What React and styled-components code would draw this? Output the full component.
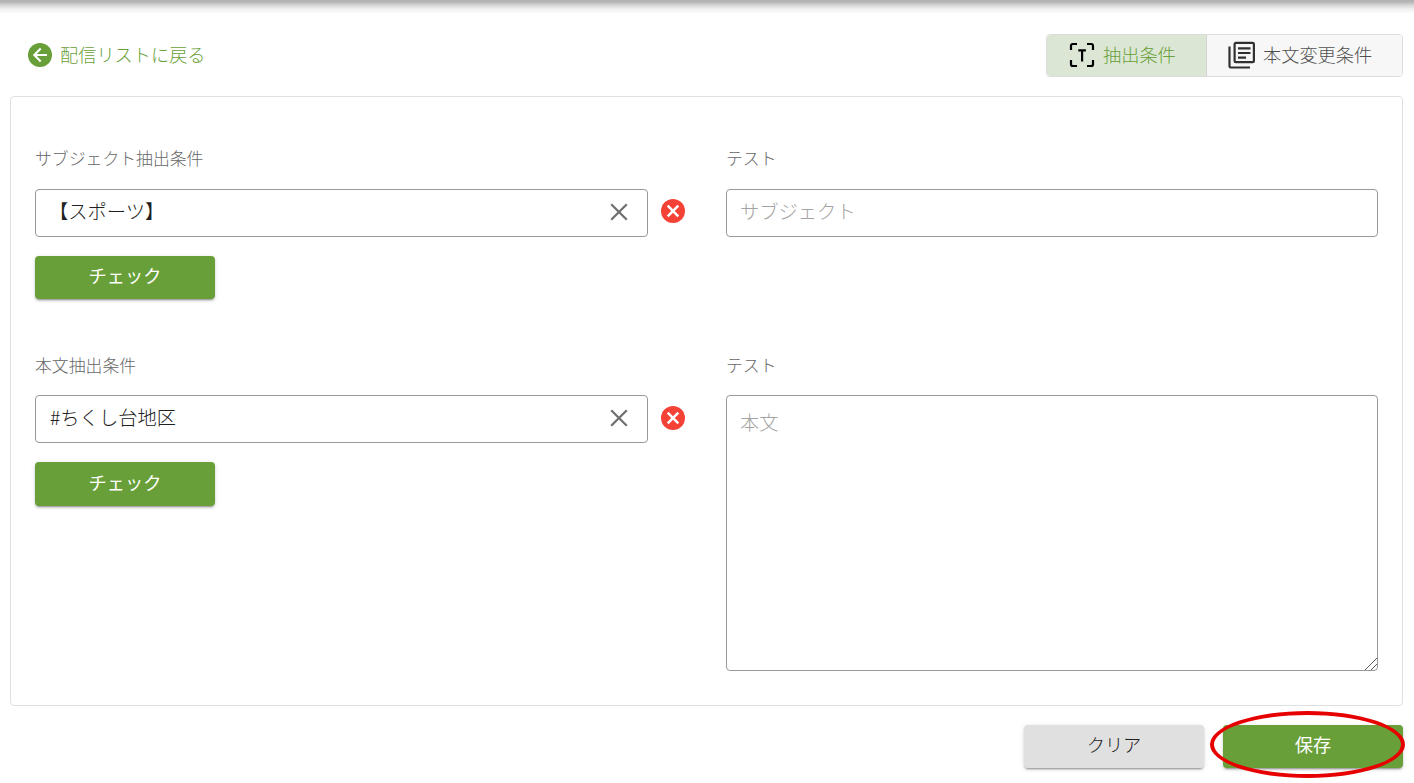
import React from "react";
import styled, { createGlobalStyle } from "styled-components";

const GlobalStyle = createGlobalStyle`
  * { box-sizing: border-box; }
  body { margin: 0; background: #fff; overflow: hidden; }
  body, input, textarea, button {
    font-family: "Noto Sans CJK JP", "Noto Sans", sans-serif;
    font-weight: 300;
  }
`;

const Page = styled.main`
  width: 1414px;
  height: 783px;
  padding: 0 11px 0 10px;
  display: flex;
  flex-direction: column;
  background: linear-gradient(#b0b0b0 0, #b6b6b6 2px, #d4d4d4 5px, #f0f0f0 9px, #fff 14px);
`;

const Header = styled.header`
  display: flex;
  justify-content: space-between;
  align-items: center;
  margin-top: 34px;
  height: 43px;
`;

const BackLink = styled.a`
  display: flex;
  align-items: center;
  gap: 8px;
  margin-left: 18px;
  padding-bottom: 2px;
  color: #689f38;
  font-size: 18.2px;
  line-height: 24px;
  svg { display: block; }
  span { padding-bottom: 2px; }
`;

const ToggleGroup = styled.div`
  display: flex;
  width: 357px;
  height: 43px;
  border: 1px solid #dcdcdc;
  border-radius: 4px;
  overflow: hidden;
`;

const Toggle = styled.button`
  width: ${(p) => p.$width}px;
  padding: 0 0 1px ${(p) => p.$indent}px;
  border: 0;
  border-left: ${(p) => (p.$active ? "0" : "1px solid #d4d4d4")};
  display: flex;
  align-items: center;
  gap: ${(p) => p.$gap}px;
  font-size: 18.2px;
  line-height: 24px;
  color: ${(p) => (p.$active ? "#689f38" : "#505050")};
  background: ${(p) => (p.$active ? "#dbe7d4" : "#f7f7f7")};
  svg { flex: none; display: block; }
  span { padding-bottom: 3px; white-space: nowrap; }
`;

const Panel = styled.section`
  margin-top: 19px;
  height: 610px;
  border: 1px solid #e0e0e0;
  border-radius: 4px;
  padding: 47px 24px 0;
`;

const Row = styled.div`
  display: grid;
  grid-template-columns: 651px 652px;
  column-gap: 40px;
  height: ${(p) => p.$height}px;
`;

const Column = styled.div`
  display: flex;
  flex-direction: column;
  align-items: flex-start;
`;

const Label = styled.label`
  height: 45px;
  padding-top: ${(p) => p.$drop || 0}px;
  font-size: 16.85px;
  line-height: 28px;
  color: #666;
`;

const FieldLine = styled.div`
  display: flex;
  align-items: center;
  gap: 13px;
`;

const FieldBox = styled.div`
  display: flex;
  align-items: center;
  width: ${(p) => p.$width}px;
  height: 48px;
  border: 1px solid #999;
  border-radius: 4px;
  padding: 0 14px 0 13px;
`;

const TextInput = styled.input`
  flex: 1;
  min-width: 0;
  border: 0;
  outline: 0;
  padding: 0 0 4px ${(p) => p.$indent || 0}px;
  background: transparent;
  font-size: 19.3px;
  line-height: 28px;
  color: #212121;
  &::placeholder { color: #a3a3a3; opacity: 1; }
`;

const ClearSlot = styled.span`
  display: flex;
  margin: 0 5px 2px 0;
`;

const TextAreaBox = styled.div`
  position: relative;
`;

const TextArea = styled.textarea`
  display: block;
  width: 652px;
  height: 276px;
  border: 1px solid #999;
  border-radius: 4px;
  outline: 0;
  padding: 12px 13px;
  font-size: 19.3px;
  line-height: 28px;
  resize: none;
  &::placeholder { color: #a3a3a3; opacity: 1; }
`;

const Grip = styled.svg`
  position: absolute;
  right: 0;
  bottom: 0;
`;

const Button = styled.button`
  width: 180px;
  height: ${(p) => p.$height || 43}px;
  padding: 0 0 5px;
  border: 0;
  border-radius: 4px;
  font-size: 18.2px;
  line-height: 24px;
  font-weight: ${(p) => (p.$neutral ? 300 : 400)};
  color: ${(p) => (p.$neutral ? "#212121" : "#fff")};
  background: ${(p) => (p.$neutral ? "#e0e0e0" : "#689f38")};
  box-shadow: 0 3px 1px -2px rgba(0,0,0,.2), 0 2px 2px rgba(0,0,0,.14), 0 1px 5px rgba(0,0,0,.12);
`;

const CheckButton = styled(Button)`
  margin-top: 19px;
`;

const Footer = styled.footer`
  display: flex;
  justify-content: flex-end;
  gap: 19px;
  margin-top: 19px;
`;

const SaveSlot = styled.div`
  position: relative;
`;

const Highlight = styled.div`
  position: absolute;
  left: -13px;
  top: -14px;
  width: 195px;
  height: 67px;
  border: 4px solid #e60000;
  border-radius: 50%;
  pointer-events: none;
`;

const BackIcon = () => (
  <svg width="24" height="24" viewBox="0 0 24 24" fill="none">
    <circle cx="12" cy="12" r="12" fill="#689f38" />
    <path d="M19 12H6.5M12.7 5.6 6.3 12l6.4 6.4" stroke="#fff" strokeWidth="2.1" />
  </svg>
);

const TextScanIcon = () => (
  <svg width="26" height="26" viewBox="0 0 26 26" fill="none" stroke="#000" strokeWidth="2.2">
    <path d="M2 8V3.8Q2 2 3.8 2H8M18 2h4.2Q24 2 24 3.8V8M24 18v4.2Q24 24 22.2 24H18M8 24H3.8Q2 24 2 22.2V18" />
    <path d="M9.3 8.3h7.6M13.1 8.3V19.5" />
  </svg>
);

const ArticleIcon = () => (
  <svg width="28" height="28" viewBox="0 0 28 28" fill="none" stroke="#303030" strokeWidth="2.2">
    <rect x="6.6" y="1.9" width="19.3" height="19.3" rx="1.3" />
    <path d="M1.5 5.500V25.300Q1.500 26.500 2.700 26.500H22M10 7.300H22.500M10 12H22.500M10 16.700H18" />
  </svg>
);

const CloseIcon = () => (
  <svg width="18" height="18" viewBox="0 0 18 18" stroke="#707070" strokeWidth="2.3">
    <path d="M1.2 1.2 16.8 16.8M16.8 1.2 1.2 16.8" />
  </svg>
);

const ErrorMark = styled.svg`
  display: block;
  margin-bottom: ${(p) => p.$lift}px;
`;

const ErrorIcon = ({ lift }) => (
  <ErrorMark $lift={lift} width="24" height="24" viewBox="0 0 24 24">
    <circle cx="12" cy="12" r="12" fill="#f44336" />
    <path d="M6.7 6.7 17.3 17.3M17.3 6.7 6.7 17.3" stroke="#fff" strokeWidth="2.5" />
  </ErrorMark>
);

function Condition({ label, value, drop, indent, lift, buttonHeight }) {
  return (
    <Column>
      <Label $drop={drop}>{label}</Label>
      <FieldLine>
        <FieldBox $width={613}>
          <TextInput defaultValue={value} $indent={indent} />
          <ClearSlot><CloseIcon /></ClearSlot>
        </FieldBox>
        <ErrorIcon lift={lift} />
      </FieldLine>
      <CheckButton $height={buttonHeight}>チェック</CheckButton>
    </Column>
  );
}

export default function App() {
  return (
    <>
      <GlobalStyle />
      <Page>
        <Header>
          <BackLink><BackIcon /><span>配信リストに戻る</span></BackLink>
          <ToggleGroup>
            <Toggle $active $width={159} $indent={22} $gap={8}>
              <TextScanIcon /><span>抽出条件</span>
            </Toggle>
            <Toggle $width={196} $indent={21} $gap={7}>
              <ArticleIcon /><span>本文変更条件</span>
            </Toggle>
          </ToggleGroup>
        </Header>
        <Panel>
          <Row $height={206}>
            <Condition label="サブジェクト抽出条件" value="【スポーツ】" lift={4} buttonHeight={43} />
            <Column>
              <Label>テスト</Label>
              <FieldBox $width={652}>
                <TextInput placeholder="サブジェクト" />
              </FieldBox>
            </Column>
          </Row>
          <Row $height={330}>
            <Condition label="本文抽出条件" value="#ちくし台地区" drop={1} indent={1} lift={2} buttonHeight={44} />
            <Column>
              <Label $drop={1}>テスト</Label>
              <TextAreaBox>
                <TextArea placeholder="本文" />
                <Grip width="14" height="14" viewBox="0 0 14 14" stroke="#606060" strokeWidth="1">
                  <path d="M1 13 13 1M7 13 13 7" />
                </Grip>
              </TextAreaBox>
            </Column>
          </Row>
        </Panel>
        <Footer>
          <Button $neutral>クリア</Button>
          <SaveSlot>
            <Button>保存</Button>
            <Highlight />
          </SaveSlot>
        </Footer>
      </Page>
    </>
  );
}
